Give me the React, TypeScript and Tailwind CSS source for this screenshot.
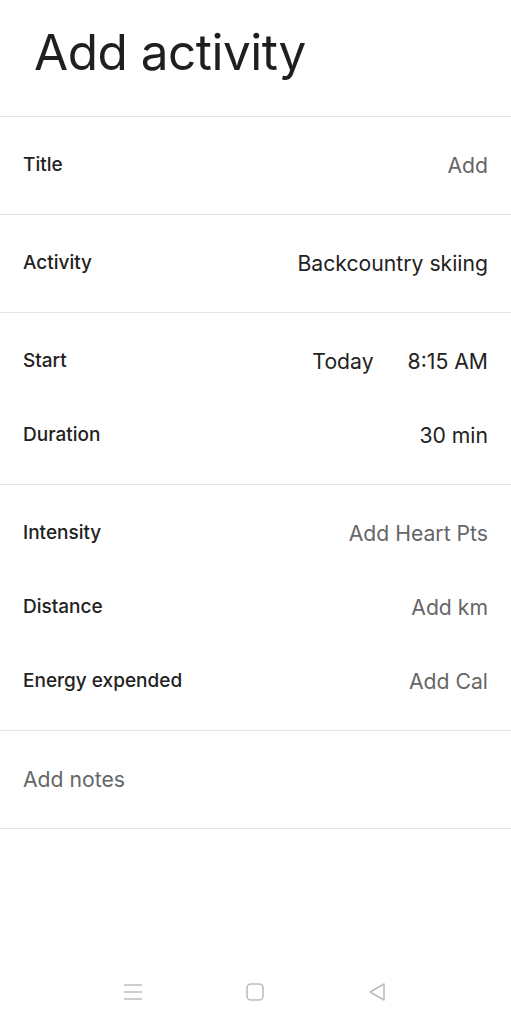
import React from "react";

type Row = { label: string; value: React.ReactNode; muted?: boolean };

const groups: Row[][] = [
  [{ label: "Title", value: "Add", muted: true }],
  [{ label: "Activity", value: "Backcountry skiing" }],
  [
    {
      label: "Start",
      value: (
        <span className="flex gap-[34px]">
          <span>Today</span>
          <span>8:15 AM</span>
        </span>
      ),
    },
    { label: "Duration", value: "30 min" },
  ],
  [
    { label: "Intensity", value: "Add Heart Pts", muted: true },
    { label: "Distance", value: "Add km", muted: true },
    { label: "Energy expended", value: "Add Cal", muted: true },
  ],
];

export default function App() {
  return (
    <div
      className="w-[511px] h-[1024px] bg-white flex flex-col text-[#202124]"
      style={{ fontFamily: "Inter, Roboto, 'Noto Sans', sans-serif" }}
    >
      <h1 className="h-[116px] px-[34px] pt-[22px] text-[49.5px] leading-[60px] font-normal tracking-[-0.5px] text-[#1f1f1f]">
        Add activity
      </h1>

      {groups.map((rows, i) => (
        <div key={i} className="border-t border-[#e4e4e4] py-[11.5px]">
          {rows.map((r) => (
            <div key={r.label} className="h-[74px] flex items-center justify-between px-[23px]">
              <span className="text-[19px] font-medium text-[#222]">{r.label}</span>
              <span className={`text-[21.2px] ${r.muted ? "text-[#666]" : "text-[#222]"}`}>
                {r.value}
              </span>
            </div>
          ))}
        </div>
      ))}

      <div className="border-t border-b border-[#e4e4e4] py-[11.5px]">
        <div className="h-[74px] flex items-center px-[23px] text-[21.2px] text-[#666]">Add notes</div>
      </div>

      <div className="flex-1" />

      <div className="h-[62px] flex items-center justify-between pl-[123px] pr-[124px] pb-[2px]">
        <svg width="20" height="18" viewBox="0 0 20 18" fill="none" stroke="#bdbdbd" strokeWidth="1.6">
          <path d="M1 2h18M1 9h18M1 16h18" />
        </svg>
        <svg width="20" height="20" viewBox="0 0 20 20" fill="none" stroke="#bdbdbd" strokeWidth="1.6">
          <rect x="2" y="2" width="16" height="16" rx="4" />
        </svg>
        <svg width="20" height="20" viewBox="0 0 20 20" fill="none" stroke="#bdbdbd" strokeWidth="1.6" strokeLinejoin="round">
          <path d="M17 2v16L3 10z" />
        </svg>
      </div>
    </div>
  );
}
